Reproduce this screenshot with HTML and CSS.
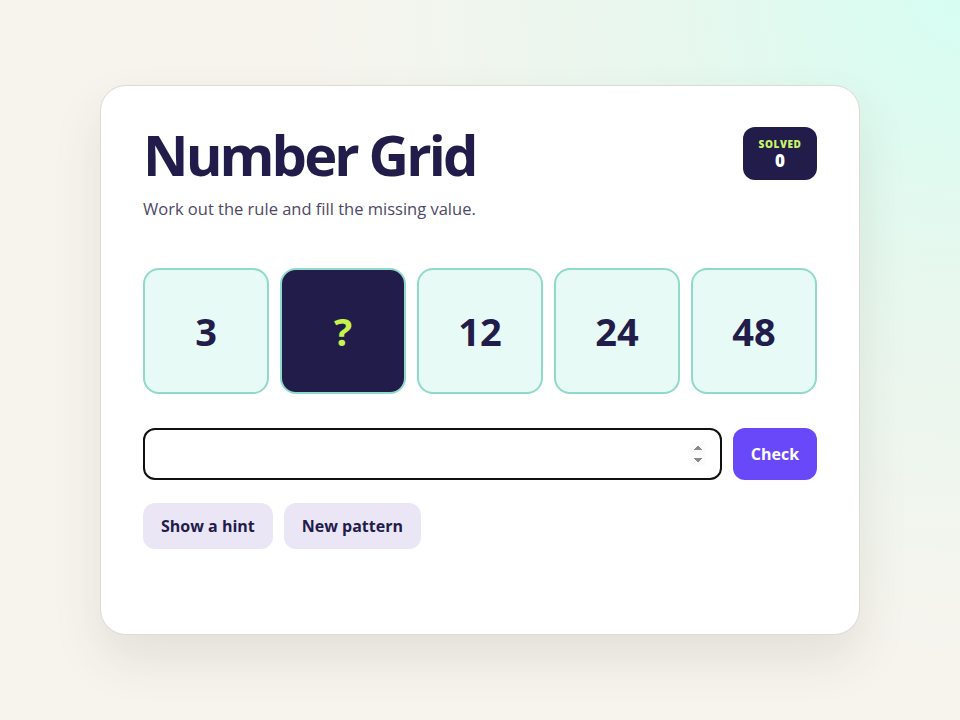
FILE: index.html
```html
<!DOCTYPE html>
<html lang="en">
<head>
<meta charset="utf-8">
<title>Number Grid</title>
<link rel="stylesheet" href="styles.css">
</head>
<body>
<main class="card">
  <header class="head">
    <div class="titles">
      <h1 class="title">Number Grid</h1>
      <p class="sub">Work out the rule and fill the missing value.</p>
    </div>
    <div class="badge">
      <span class="badge-label">SOLVED</span>
      <span class="badge-num">0</span>
    </div>
  </header>
  <section class="tiles">
    <div class="tile">3</div>
    <div class="tile tile-q">?</div>
    <div class="tile">12</div>
    <div class="tile">24</div>
    <div class="tile">48</div>
  </section>
  <form class="answer" onsubmit="return false">
    <input class="field" type="number" aria-label="Answer">
    <button class="btn-check" type="submit">Check</button>
  </form>
  <div class="actions">
    <button class="btn-soft" type="button">Show a hint</button>
    <button class="btn-soft" type="button">New pattern</button>
  </div>
</main>
</body>
</html>
```
FILE: styles.css
```css
* { box-sizing: border-box; }
html, body { height: 100%; }
body {
  margin: 0;
  font-family: "Open Sans", "Noto Sans", sans-serif;
  background:
    radial-gradient(circle at 100% 0%, #d6fdf2 0%, rgba(222, 250, 238, 0.6) 25%, rgba(247, 244, 238, 0) 55%),
    #f7f4ee;
  display: flex;
  align-items: center;
  justify-content: center;
  color: #221c4a;
}
.card {
  width: 760px;
  height: 550px;
  background: #fff;
  border: 1px solid #dedad4;
  border-radius: 26px;
  padding: 36px 42px;
  box-shadow: 0 24px 50px rgba(60, 50, 30, 0.10);
}
.head {
  display: flex;
  justify-content: space-between;
  align-items: flex-start;
}
.title {
  margin: 0;
  font-size: 56px;
  font-weight: 700;
  letter-spacing: -2.9px;
  line-height: 64px;
  color: #221c4a;
}
.sub {
  margin: 11px 0 0;
  font-size: 16.5px;
  color: #4d4865;
}
.badge {
  margin-top: 5px;
  width: 74px;
  height: 53px;
  border-radius: 12px;
  background: #221c4a;
  display: flex;
  flex-direction: column;
  align-items: center;
  justify-content: center;
  line-height: 1;
}
.badge-label {
  font-size: 10px;
  font-weight: 800;
  letter-spacing: 0.6px;
  color: #c9f46a;
}
.badge-num {
  margin-top: 3px;
  font-size: 17px;
  font-weight: 800;
  color: #fff;
}
.tiles {
  margin-top: 48px;
  display: grid;
  grid-template-columns: repeat(5, 1fr);
  gap: 11px;
}
.tile {
  aspect-ratio: 1;
  border: 2px solid #8fdac8;
  border-radius: 16px;
  background: #e8faf6;
  display: flex;
  align-items: center;
  justify-content: center;
  font-size: 38px;
  font-weight: 700;
  color: #221c4a;
}
.tile-q {
  background: #221c4a;
  color: #c6f44e;
}
.answer {
  margin: 34px 0 0;
  display: flex;
  gap: 11px;
}
.field {
  flex: 1;
  height: 52px;
  border: 2px solid #111;
  border-radius: 12px;
  padding: 0 14px;
  font: inherit;
  font-size: 18px;
  background: #fff;
}
.field::-webkit-inner-spin-button { opacity: 1; }
.btn-check {
  width: 84px;
  height: 52px;
  border: 0;
  border-radius: 12px;
  background: #6948fa;
  color: #fff;
  font-family: inherit;
  font-size: 16px;
  font-weight: 700;
}
.actions {
  margin-top: 23px;
  display: flex;
  gap: 11px;
}
.btn-soft {
  height: 46px;
  padding: 0 18px;
  border: 0;
  border-radius: 12px;
  background: #ebe6f5;
  color: #221c4a;
  font-family: inherit;
  font-size: 16px;
  font-weight: 700;
}
```
